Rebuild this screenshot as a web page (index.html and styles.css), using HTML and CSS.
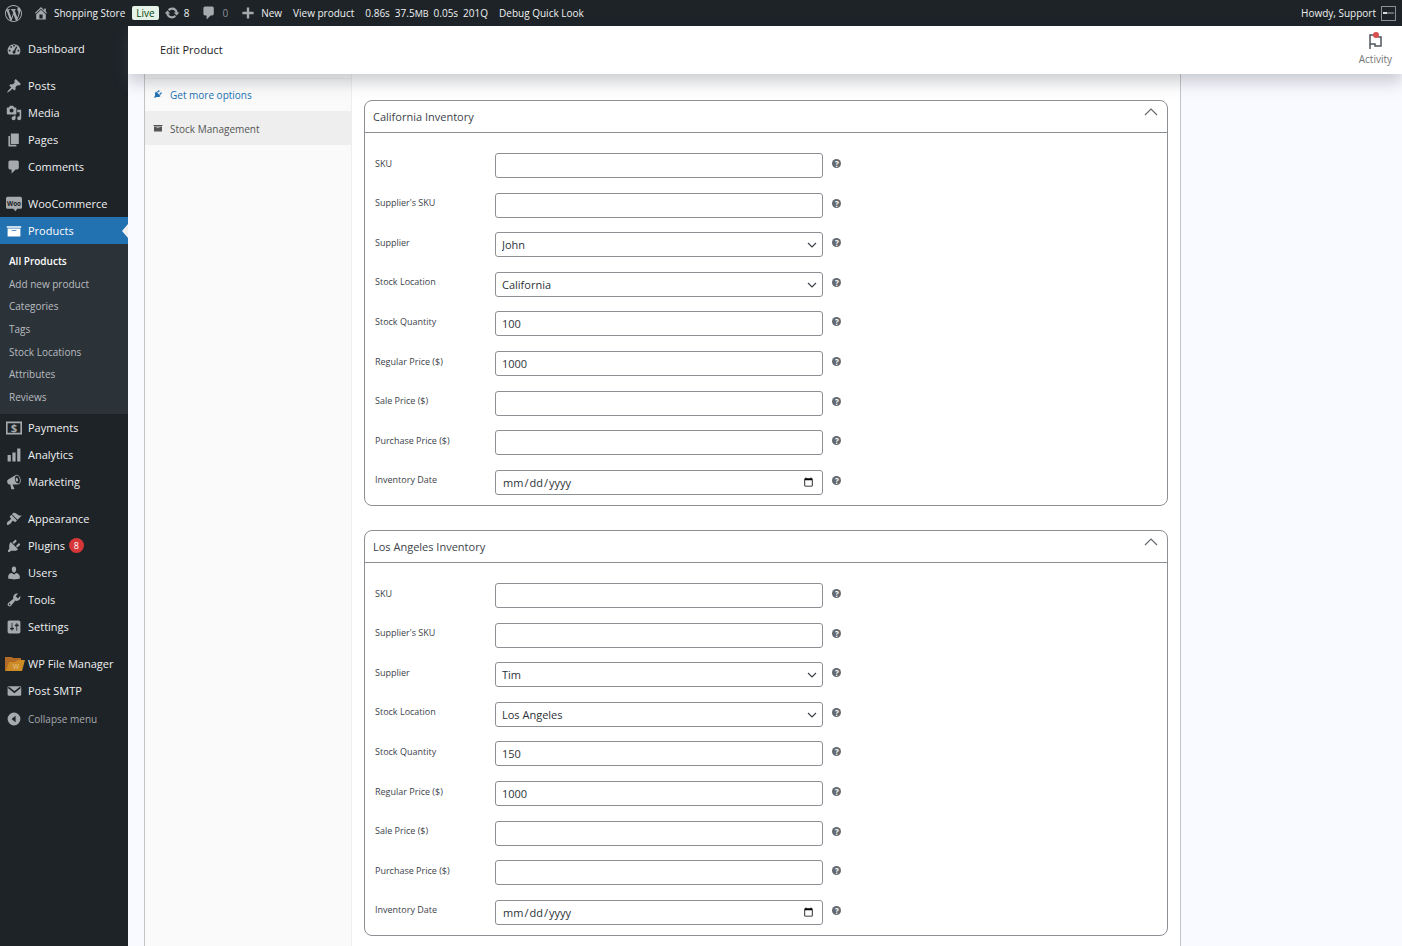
FILE: index.html
```html
<!DOCTYPE html>
<html lang="en">
<head>
    <meta charset="UTF-8">
    <meta name="viewport" content="width=device-width, initial-scale=1.0">
    <title>Edit Product - Shopping Store</title>
    <link rel="stylesheet" href="styles.css">
</head>
<body>
    <!-- Icon sprite -->
    <svg class="sprite" aria-hidden="true">
        <symbol id="i-wordpress" viewBox="0 0 20 20"><path d="M20 10c0-5.51-4.49-10-10-10C4.48 0 0 4.49 0 10c0 5.52 4.48 10 10 10 5.51 0 10-4.48 10-10zM7.78 15.37L4.37 6.22c.55-.02 1.17-.08 1.17-.08.5-.06.44-1.13-.06-1.11 0 0-1.45.11-2.37.11-.18 0-.37 0-.58-.01C4.12 2.69 6.87 1.11 10 1.11c2.33 0 4.45.87 6.05 2.34-.68-.11-1.65.39-1.65 1.58 0 .74.45 1.36.9 2.1.35.61.55 1.36.55 2.46 0 1.49-1.4 5-1.4 5l-3.03-8.37c.54-.02.82-.17.82-.17.5-.05.44-1.25-.06-1.22 0 0-1.44.12-2.38.12-.87 0-2.33-.12-2.33-.12-.5-.03-.56 1.2-.06 1.22l.92.08 1.26 3.41zM17.41 10c.24-.64.74-1.87.43-4.25.7 1.29 1.05 2.71 1.05 4.25 0 3.29-1.73 6.24-4.4 7.78.97-2.59 1.94-5.2 2.92-7.78zM6.1 18.09C3.12 16.65 1.11 13.53 1.11 10c0-1.3.23-2.48.72-3.59C3.25 10.3 4.67 14.2 6.1 18.09zm4.03-6.63l2.58 6.98c-.86.29-1.76.45-2.71.45-.79 0-1.57-.11-2.29-.33.81-2.38 1.62-4.74 2.42-7.1z"/></symbol>
        <symbol id="i-home" viewBox="0 0 20 20"><path d="M16 8.5l1.53 1.53-1.06 1.06L10 4.6l-6.47 6.49-1.06-1.06L10 2.5l4 4v-2h2v4zm-6-2.46l6 5.99V18H4v-5.97zM12 17v-5H8v5h4z"/></symbol>
        <symbol id="i-update" viewBox="0 0 20 20"><path d="M10.2 3.28c3.53 0 6.43 2.61 6.92 6h2.08l-3.5 4-3.5-4h2.32c-.45-1.97-2.21-3.45-4.32-3.45-1.45 0-2.73.71-3.54 1.78L4.95 5.66C6.23 4.2 8.11 3.28 10.2 3.28zm-.4 13.44c-3.52 0-6.43-2.61-6.92-6H.8l3.5-4c1.17 1.33 2.33 2.67 3.5 4H5.48c.45 1.97 2.21 3.45 4.32 3.45 1.45 0 2.73-.71 3.54-1.78l1.71 1.95c-1.28 1.46-3.15 2.38-5.25 2.38z"/></symbol>
        <symbol id="i-plus" viewBox="0 0 20 20"><path d="M17 8.5v3h-5.5V17h-3v-5.5H3v-3h5.5V3h3v5.5z"/></symbol>
        <symbol id="i-dashboard" viewBox="0 0 20 20"><path fill-rule="evenodd" d="M3.76 17h12.48C17.34 15.63 18 13.89 18 12c0-4.42-3.58-8-8-8s-8 3.58-8 8c0 1.89.66 3.63 1.76 5zM9 5h2v2H9zM5.5 6.500h2v2h-2zM3.500 11h2v2h-2zM14.500 11h2v2h-2zM12.800 6.700l1.300.8-2.400 5.300a1.900 1.900 0 1 1-1.600-.9z"/></symbol>
        <symbol id="i-post" viewBox="0 0 20 20"><path d="M10.44 3.02l1.82-1.82 6.36 6.35-1.83 1.82c-1.05-.68-2.48-.57-3.41.36l-.75.75c-.92.93-1.04 2.35-.35 3.41l-1.83 1.82-2.41-2.41-2.8 2.79c-.42.42-3.38 2.71-3.8 2.29s1.86-3.39 2.28-3.81l2.79-2.79L4.1 9.36l1.83-1.82c1.05.69 2.48.57 3.4-.36l.75-.75c.93-.92 1.05-2.35.36-3.41z"/></symbol>
        <symbol id="i-media" viewBox="0 0 20 20"><path fill-rule="evenodd" d="M13 11V4c0-.55-.45-1-1-1h-1.67L9 1H5L3.67 3H2c-.55 0-1 .45-1 1v7c0 .55.45 1 1 1h10c.55 0 1-.45 1-1zM7 4.5c1.38 0 2.5 1.12 2.5 2.5S8.38 9.5 7 9.5 4.5 8.38 4.5 7 5.62 4.5 7 4.5zM14 6h5v10.5c0 1.38-1.12 2.5-2.5 2.5S14 17.88 14 16.5s1.12-2.5 2.5-2.5c.17 0 .34.02.5.05V9h-3V6zm-4 8.05V13h2v3.5c0 1.38-1.12 2.5-2.5 2.5S7 17.88 7 16.5 8.12 14 9.5 14c.17 0 .34.02.5.05z"/></symbol>
        <symbol id="i-page" viewBox="0 0 20 20"><path d="M6 15V2h10v13H6zm-1 1h8v2H3V5h2v11z"/></symbol>
        <symbol id="i-comments" viewBox="0 0 20 20"><path d="M5 2h9c1.1 0 2 .9 2 2v7c0 1.1-.9 2-2 2h-2l-5 5v-5H5c-1.1 0-2-.9-2-2V4c0-1.1.9-2 2-2z"/></symbol>
        <symbol id="i-archive" viewBox="0 0 20 20"><path fill-rule="evenodd" d="M19 4v2H1V4h18zM2 7h16v10H2V7zm11 3V9H7v1h6z"/></symbol>
        <symbol id="i-chart" viewBox="0 0 20 20"><path d="M18 18V2h-4v16h4zm-6 0V7H8v11h4zm-6 0v-8H2v8h4z"/></symbol>
        <symbol id="i-megaphone" viewBox="0 0 20 20"><path fill-rule="evenodd" d="M18.15 5.94c.46 1.62.38 3.22-.02 4.48-.42 1.28-1.26 2.18-2.3 2.48-.16.06-.26.06-.4.06-.06.02-.12.02-.18.02-.06.02-.14.02-.22.02h-6.8l2.22 5.5c.02.14-.06.26-.14.34-.08.1-.24.16-.34.16H6.95c-.1 0-.26-.06-.34-.16-.08-.08-.16-.2-.14-.34l-1-5.5H4.25l-.02-.02c-.5.06-1.08-.18-1.54-.62s-.88-1.08-1.06-1.88c-.24-.8-.2-1.56-.02-2.2.18-.62.58-1.08 1.06-1.3l.02-.02 9-5.4c.1-.06.18-.1.24-.16.06-.04.14-.08.24-.12.16-.08.28-.12.5-.18 1.04-.3 2.24.1 3.22.98s1.84 2.24 2.26 3.86zm-2.58 5.98h-.02c.4-.1.74-.34 1.04-.7.58-.7.86-1.76.86-3.04 0-.64-.1-1.3-.28-1.98-.34-1.36-1.02-2.5-1.78-3.24s-1.68-1.1-2.46-.88c-.82.22-1.4.96-1.7 2-.32 1.04-.28 2.36.06 3.72.38 1.36 1 2.5 1.8 3.24.78.74 1.62 1.1 2.48.88zm-2.54-7.08c.22-.04.42-.02.62.04.38.16.76.48 1.02 1s.42 1.2.42 1.78c0 .3-.04.56-.12.8-.18.48-.44.84-.86.94-.34.1-.8-.06-1.14-.4s-.64-.86-.78-1.5c-.18-.62-.12-1.24.02-1.72s.48-.84.82-.94z"/></symbol>
        <symbol id="i-appearance" viewBox="0 0 20 20"><path d="M14.48 11.06L7.41 3.99l1.5-1.5c.5-.56 2.3-.47 3.51.32 1.21.8 1.43 1.28 2.91 2.1 1.18.64 2.45 1.26 4.45.85zm-.71.71L6.7 4.7 4.93 6.47c-.39.39-.39 1.02 0 1.41l1.06 1.06c.39.39.39 1.03 0 1.42-.6.6-1.43 1.11-2.21 1.69-.35.26-.7.53-1.01.84C1.43 14.23.4 16.08 1.4 17.07c.99 1 2.84-.03 4.18-1.36.31-.31.58-.66.85-1.02.57-.78 1.08-1.61 1.69-2.21.39-.39 1.02-.39 1.41 0l1.06 1.06c.39.39 1.02.39 1.41 0z"/></symbol>
        <symbol id="i-plugins" viewBox="0 0 20 20"><path d="M13.11 4.36L9.87 7.6 8 5.73l3.24-3.24c.35-.34 1.05-.2 1.56.32.52.51.66 1.21.31 1.55zm-8 1.77l.91-1.12 9.01 9.01-1.19.84c-.71.71-2.63 1.16-3.82 1.16H6.14L4.9 17.26c-.59.59-1.54.59-2.12 0-.59-.58-.59-1.53 0-2.12l1.24-1.24v-3.88c0-1.13.4-3.19 1.09-3.89zm7.26 3.97l3.24-3.24c.34-.35 1.04-.21 1.55.31.52.51.66 1.21.31 1.55l-3.24 3.25z"/></symbol>
        <symbol id="i-users" viewBox="0 0 20 20"><path d="M10 9.25c-2.27 0-2.73-3.44-2.73-3.44C7 4.02 7.82 2 9.97 2c2.16 0 2.98 2.02 2.71 3.81 0 0-.41 3.44-2.68 3.44zm0 2.57L12.72 10c2.39 0 4.52 2.33 4.52 4.53v2.49s-3.65 1.13-7.24 1.13c-3.65 0-7.24-1.13-7.24-1.13v-2.49c0-2.25 1.94-4.48 4.47-4.48z"/></symbol>
        <symbol id="i-tools" viewBox="0 0 20 20"><path fill-rule="evenodd" d="M16.68 9.77c-1.34 1.34-3.3 1.67-4.95.99l-5.41 6.52c-.99.99-2.59.99-3.58 0s-.99-2.59 0-3.57l6.52-5.42c-.68-1.65-.35-3.61.99-4.95 1.28-1.28 3.12-1.62 4.72-1.06l-2.89 2.89 2.82 2.82 2.86-2.87c.53 1.58.18 3.39-1.08 4.65zM3.81 16.21c.4.39 1.04.39 1.43 0 .4-.4.4-1.04 0-1.43-.39-.4-1.03-.4-1.43 0-.39.39-.39 1.03 0 1.43z"/></symbol>
        <symbol id="i-settings" viewBox="0 0 20 20"><path fill-rule="evenodd" d="M18 16V4c0-1.1-.9-2-2-2H4c-1.1 0-2 .9-2 2v12c0 1.1.9 2 2 2h12c1.1 0 2-.9 2-2zM8 11h1c.55 0 1 .45 1 1s-.45 1-1 1H8v1.5c0 .28-.22.5-.5.5s-.5-.22-.5-.5V13H6c-.55 0-1-.45-1-1s.45-1 1-1h1V5.5c0-.28.22-.5.5-.5s.5.22.5.5V11zm5-2h-1c-.55 0-1-.45-1-1s.45-1 1-1h1V5.5c0-.28.22-.5.5-.5s.5.22.5.5V7h1c.55 0 1 .45 1 1s-.45 1-1 1h-1v5.5c0 .28-.22.5-.5.5s-.5-.22-.5-.5V9z"/></symbol>
        <symbol id="i-email" viewBox="0 0 20 20"><path d="M3.5 4h14A1.5 1.5 0 0 1 19 5.5v9a1.5 1.5 0 0 1-1.5 1.5h-14A1.5 1.5 0 0 1 2 14.500v-9A1.500 1.500 0 0 1 3.500 4z"/><path class="cut" d="M3 5.500l7.500 6 7.500-6"/></symbol>
        <symbol id="i-collapse" viewBox="0 0 20 20"><path fill-rule="evenodd" d="M10 2a8 8 0 1 0 0 16 8 8 0 0 0 0-16zM12 6v8l-5-4z"/></symbol>
        <symbol id="i-down" viewBox="0 0 10 6"><path class="line" d="M1 1l4 4 4-4"/></symbol>
        <symbol id="i-up" viewBox="0 0 14 8"><path class="line" d="M1 7l6-6 6 6"/></symbol>
    </svg>

    <!-- Admin bar -->
    <header class="admin-bar">
        <a href="#" class="bar-logo" aria-label="About WordPress"><svg class="icon-lg"><use href="#i-wordpress"/></svg></a>
        <a href="#" class="bar-site"><svg class="icon"><use href="#i-home"/></svg>Shopping Store</a>
        <a href="#" class="bar-live">Live</a>
        <a href="#" class="bar-updates"><svg class="icon"><use href="#i-update"/></svg>8</a>
        <a href="#" class="bar-comments"><svg class="icon"><use href="#i-comments"/></svg><span>0</span></a>
        <a href="#" class="bar-new"><svg class="icon"><use href="#i-plus"/></svg>New</a>
        <a href="#" class="bar-view">View product</a>
        <a href="#" class="bar-stats"><span>0.86s</span><span>37.5<small>MB</small></span><span>0.05s</span><span>201Q</span></a>
        <a href="#">Debug Quick Look</a>
        <a href="#" class="bar-account">Howdy, Support<span class="avatar"></span></a>
    </header>

    <div class="wrap">
        <!-- Side menu -->
        <nav class="side-menu">
            <a href="#"><svg class="icon"><use href="#i-dashboard"/></svg>Dashboard</a>
            <div class="separator"></div>
            <a href="#"><svg class="icon"><use href="#i-post"/></svg>Posts</a>
            <a href="#"><svg class="icon"><use href="#i-media"/></svg>Media</a>
            <a href="#"><svg class="icon"><use href="#i-page"/></svg>Pages</a>
            <a href="#"><svg class="icon"><use href="#i-comments"/></svg>Comments</a>
            <div class="separator"></div>
            <a href="#"><svg class="icon" viewBox="0 0 20 20"><path d="M2 1h16a2 2 0 0 1 2 2v11a2 2 0 0 1-2 2h-4l-2 3-3-3H2a2 2 0 0 1-2-2V3a2 2 0 0 1 2-2z"/><text x="10" y="12" class="woo-mark">Woo</text></svg>WooCommerce</a>
            <a href="#" class="current"><svg class="icon"><use href="#i-archive"/></svg>Products</a>
            <div class="submenu">
                <a href="#" class="active">All Products</a>
                <a href="#">Add new product</a>
                <a href="#">Categories</a>
                <a href="#">Tags</a>
                <a href="#">Stock Locations</a>
                <a href="#">Attributes</a>
                <a href="#">Reviews</a>
            </div>
            <a href="#"><svg class="icon" viewBox="0 0 20 20"><path fill-rule="evenodd" d="M0 2h20v16H0zM2 4v12h16V4z"/><text x="10" y="15" class="dollar-mark">$</text></svg>Payments</a>
            <a href="#"><svg class="icon"><use href="#i-chart"/></svg>Analytics</a>
            <a href="#"><svg class="icon"><use href="#i-megaphone"/></svg>Marketing</a>
            <div class="separator"></div>
            <a href="#"><svg class="icon"><use href="#i-appearance"/></svg>Appearance</a>
            <a href="#"><svg class="icon"><use href="#i-plugins"/></svg>Plugins<span class="count">8</span></a>
            <a href="#"><svg class="icon"><use href="#i-users"/></svg>Users</a>
            <a href="#"><svg class="icon"><use href="#i-tools"/></svg>Tools</a>
            <a href="#"><svg class="icon"><use href="#i-settings"/></svg>Settings</a>
            <div class="separator"></div>
            <a href="#"><svg class="icon folder" viewBox="0 0 20 16"><path fill="#b26a26" d="M0 1h7l1 1h8v13H0z"/><path fill="#cd8b26" d="M4 6h6l3-2h7l-3 11H1z"/><text x="11" y="13" class="folder-mark">W</text></svg>WP File Manager</a>
            <a href="#"><svg class="icon"><use href="#i-email"/></svg>Post SMTP</a>
            <button type="button" class="collapse"><svg class="icon"><use href="#i-collapse"/></svg>Collapse menu</button>
        </nav>

        <main class="content">
            <div class="page-header">
                <h1>Edit Product</h1>
                <button type="button" class="activity">
                    <svg width="16" height="18" viewBox="0 0 16 18"><path fill="none" stroke="#50575e" stroke-width="1.5" d="M3 17V3h5M3 12h5v2h6V5h-3"/><circle cx="9" cy="3" r="3" fill="#d94f4f"/></svg>
                    Activity
                </button>
            </div>

            <div class="product-data">
                <div class="tabs">
                    <a href="#"><svg><use href="#i-plugins"/></svg>Get more options</a>
                    <a href="#" class="active"><svg><use href="#i-archive"/></svg>Stock Management</a>
                </div>

                <form class="panel">
                    <!-- California -->
                    <section class="card">
                        <div class="card-header">
                            <h2>California Inventory</h2>
                            <button type="button" aria-label="Toggle California Inventory"><svg><use href="#i-up"/></svg></button>
                        </div>
                        <div class="card-body">
                            <div class="field"><label for="ca-sku">SKU</label><input type="text" id="ca-sku"><span class="help">?</span></div>
                            <div class="field"><label for="ca-ssku">Supplier's SKU</label><input type="text" id="ca-ssku"><span class="help">?</span></div>
                            <div class="field"><label for="ca-supplier">Supplier</label><div class="select"><select id="ca-supplier"><option>John</option><option>Tim</option></select><svg><use href="#i-down"/></svg></div><span class="help">?</span></div>
                            <div class="field"><label for="ca-location">Stock Location</label><div class="select"><select id="ca-location"><option>California</option><option>Los Angeles</option></select><svg><use href="#i-down"/></svg></div><span class="help">?</span></div>
                            <div class="field"><label for="ca-qty">Stock Quantity</label><input type="text" id="ca-qty" value="100"><span class="help">?</span></div>
                            <div class="field"><label for="ca-price">Regular Price ($)</label><input type="text" id="ca-price" value="1000"><span class="help">?</span></div>
                            <div class="field"><label for="ca-sale">Sale Price ($)</label><input type="text" id="ca-sale"><span class="help">?</span></div>
                            <div class="field"><label for="ca-purchase">Purchase Price ($)</label><input type="text" id="ca-purchase"><span class="help">?</span></div>
                            <div class="field"><label for="ca-date">Inventory Date</label><input type="date" id="ca-date"><span class="help">?</span></div>
                        </div>
                    </section>

                    <!-- Los Angeles -->
                    <section class="card">
                        <div class="card-header">
                            <h2>Los Angeles Inventory</h2>
                            <button type="button" aria-label="Toggle Los Angeles Inventory"><svg><use href="#i-up"/></svg></button>
                        </div>
                        <div class="card-body">
                            <div class="field"><label for="la-sku">SKU</label><input type="text" id="la-sku"><span class="help">?</span></div>
                            <div class="field"><label for="la-ssku">Supplier's SKU</label><input type="text" id="la-ssku"><span class="help">?</span></div>
                            <div class="field"><label for="la-supplier">Supplier</label><div class="select"><select id="la-supplier"><option>Tim</option><option>John</option></select><svg><use href="#i-down"/></svg></div><span class="help">?</span></div>
                            <div class="field"><label for="la-location">Stock Location</label><div class="select"><select id="la-location"><option>Los Angeles</option><option>California</option></select><svg><use href="#i-down"/></svg></div><span class="help">?</span></div>
                            <div class="field"><label for="la-qty">Stock Quantity</label><input type="text" id="la-qty" value="150"><span class="help">?</span></div>
                            <div class="field"><label for="la-price">Regular Price ($)</label><input type="text" id="la-price" value="1000"><span class="help">?</span></div>
                            <div class="field"><label for="la-sale">Sale Price ($)</label><input type="text" id="la-sale"><span class="help">?</span></div>
                            <div class="field"><label for="la-purchase">Purchase Price ($)</label><input type="text" id="la-purchase"><span class="help">?</span></div>
                            <div class="field"><label for="la-date">Inventory Date</label><input type="date" id="la-date"><span class="help">?</span></div>
                        </div>
                    </section>
                </form>
            </div>
        </main>
    </div>
</body>
</html>
```
FILE: styles.css
```css
* {
    box-sizing: border-box;
}
body {
    margin: 0;
    min-height: 100vh;
    display: flex;
    flex-direction: column;
    background: #f9faff;
    color: #3c434a;
    font-family: 'Segoe UI', 'Open Sans', sans-serif;
    font-size: 10px;
}
a {
    color: inherit;
    text-decoration: none;
}
button,
input,
select {
    font: inherit;
    color: inherit;
}
button {
    padding: 0;
    border: 0;
    background: none;
    cursor: pointer;
}
svg {
    flex: none;
    fill: currentColor;
}
.sprite {
    position: absolute;
    width: 0;
    height: 0;
}
.line {
    fill: none;
    stroke: currentColor;
    stroke-width: 1.2;
}
.icon {
    width: 16px;
    height: 16px;
    color: #a7aaad;
}
.icon-lg {
    width: 17px;
    height: 17px;
    color: #a7aaad;
}

/* Admin bar */
.admin-bar {
    display: flex;
    align-items: center;
    height: 26px;
    padding: 0 6px 0 5px;
    background: #1d2327;
    color: #f0f0f1;
}
.admin-bar a {
    display: flex;
    align-items: center;
}
.bar-logo {
    margin-right: 11px;
}
.bar-site {
    gap: 5px;
    margin-right: 7px;
}
.admin-bar .bar-live {
    height: 14px;
    margin-right: 5px;
    padding: 0 4px;
    border-radius: 2px;
    background: #e6f2e8;
    color: #00450c;
}
.bar-updates {
    gap: 4px;
    margin-right: 12px;
}
.bar-comments {
    gap: 5px;
    margin-right: 12px;
}
.bar-comments span {
    color: #8c8f94;
}
.bar-new {
    gap: 5px;
    margin-right: 11px;
}
.bar-view {
    margin-right: 11px;
}
.bar-stats {
    gap: 5px;
    margin-right: 11px;
}
.bar-stats small {
    font-size: 9px;
}
.admin-bar .bar-account {
    gap: 5px;
    margin-left: auto;
}
.avatar {
    display: flex;
    align-items: center;
    justify-content: center;
    width: 15px;
    height: 15px;
    border: 1px solid #8c8f94;
}
.avatar::before {
    content: "";
    width: 11px;
    height: 2px;
    background: linear-gradient(90deg, #dcdcde 40%, #646970 40%);
}

/* Side menu */
.wrap {
    display: flex;
    flex: 1;
}
.side-menu {
    flex: none;
    width: 128px;
    padding-top: 9px;
    background: #1d2327;
    color: #f0f0f1;
    font-size: 11px;
}
.side-menu > a {
    position: relative;
    display: flex;
    align-items: center;
    gap: 6px;
    height: 27px;
    padding-left: 6px;
}
.separator {
    height: 10px;
}
.side-menu > .current {
    background: #2271b1;
    color: #fff;
}
.current .icon {
    color: #fff;
}
.current::after {
    content: "";
    position: absolute;
    top: 7px;
    right: 0;
    border: 7px solid transparent;
    border-left: 0;
    border-right: 6px solid #f0f0f1;
}
.side-menu .folder {
    width: 20px;
    height: 16px;
    margin: 0 -3px 0 -1px;
}
.submenu {
    display: flex;
    flex-direction: column;
    min-height: 170px;
    padding: 6px 0;
    background: #2c3338;
    color: #b8bcc0;
    font-size: 10px;
}
.submenu a {
    display: flex;
    flex: 1;
    align-items: center;
    padding-left: 9px;
}
.submenu .active {
    color: #fff;
    font-weight: 600;
}
.count {
    width: 15px;
    height: 15px;
    margin-left: -2px;
    border-radius: 50%;
    background: #d63638;
    color: #fff;
    font-size: 9px;
    line-height: 15px;
    text-align: center;
}
.collapse {
    display: flex;
    align-items: center;
    gap: 6px;
    height: 30px;
    padding-left: 6px;
    color: #a7aaad;
    font-size: 10px;
}
.woo-mark {
    fill: #1d2327;
    font-size: 8px;
    font-weight: 700;
    text-anchor: middle;
}
.dollar-mark {
    font-size: 14px;
    font-weight: 700;
    text-anchor: middle;
}
.folder-mark {
    fill: #e9c48d;
    font-size: 7px;
    text-anchor: middle;
}
.cut {
    fill: none;
    stroke: #1d2327;
    stroke-width: 2;
}

/* Page header */
.content {
    flex: 1;
    display: flex;
    flex-direction: column;
    min-width: 0;
}
.page-header {
    position: relative;
    display: flex;
    align-items: center;
    justify-content: space-between;
    height: 48px;
    padding: 0 10px 2px 32px;
    background: #fff;
    box-shadow: 0 8px 16px rgba(85, 93, 102, 0.3);
}
.page-header h1 {
    margin: 0;
    color: #1d2327;
    font-size: 11px;
    font-weight: 500;
}
.activity {
    display: flex;
    flex-direction: column;
    align-items: center;
    gap: 2px;
    color: #757575;
    line-height: 14px;
}

/* Product data */
.product-data {
    display: flex;
    flex: 1;
    margin: 0 221px 0 16px;
    border: solid #c3c4c7;
    border-width: 0 1px;
    background: #fff;
}
.tabs {
    flex: none;
    width: 207px;
    padding-top: 4px;
    border-right: 1px solid #eee;
    background: #fafafa;
}
.tabs a {
    display: flex;
    align-items: center;
    gap: 7px;
    height: 33px;
    padding-left: 8px;
    border-top: 1px solid #eee;
    color: #2271b1;
}
.tabs svg {
    width: 10px;
    height: 10px;
    margin-bottom: 2px;
}
.tabs .active {
    height: 34px;
    background: #eee;
    color: #555;
}
.panel {
    display: flex;
    flex: 1;
    flex-direction: column;
    gap: 24px;
    padding: 26px 12px 9px;
}
.card {
    border: 1px solid #8c8f94;
    border-radius: 8px;
}
.card-header {
    display: flex;
    align-items: center;
    justify-content: space-between;
    height: 32px;
    padding: 0 9px 0 8px;
    border-bottom: 1px solid #8c8f94;
}
.card-header h2 {
    margin: 0;
    color: #3c434a;
    font-size: 11px;
    font-weight: 500;
}
.card-header button {
    display: flex;
    padding-bottom: 9px;
    color: #646970;
}
.card-header svg {
    width: 14px;
    height: 8px;
}
.card-body {
    display: grid;
    grid-auto-rows: 1fr;
    min-height: 372px;
    padding: 13px 10px 3px;
}
.field {
    display: grid;
    grid-template-columns: 120px 42% 1fr;
    align-items: center;
}
.field label {
    padding-bottom: 5px;
    color: #3c434a;
    font-size: 9px;
}
.field input,
.field select {
    width: 100%;
    height: 25px;
    padding: 0 6px;
    border: 1px solid #8c8f94;
    border-radius: 3px;
    background: #fff;
    color: #2c3338;
}
.field input {
    font-size: 11px;
}
.select {
    position: relative;
    display: flex;
}
.select select {
    appearance: none;
    font-size: 11px;
}
.select svg {
    position: absolute;
    top: 10px;
    right: 6px;
    width: 10px;
    height: 6px;
    pointer-events: none;
}
.help {
    width: 9px;
    height: 9px;
    margin: 0 0 4px 9px;
    border-radius: 50%;
    background: #646970;
    color: #fff;
    font-size: 8px;
    font-weight: 700;
    line-height: 9px;
    text-align: center;
}
```
